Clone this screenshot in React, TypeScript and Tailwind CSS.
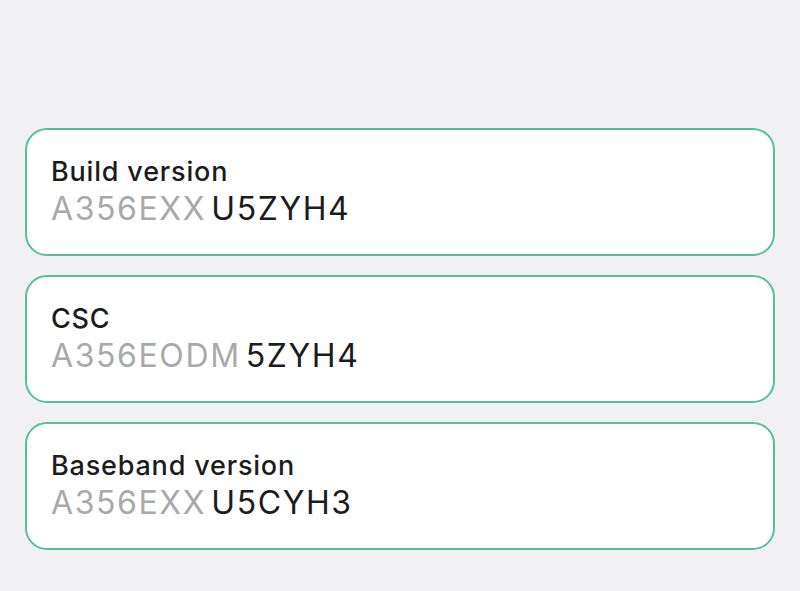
export default function App() {
  const rows = [
    { title: "Build version", grey: "A356EXX", dark: "U5ZYH4" },
    { title: "CSC", grey: "A356EODM", dark: "5ZYH4" },
    { title: "Baseband version", grey: "A356EXX", dark: "U5CYH3" },
  ];
  return (
    <div className="w-[800px] h-[591px] bg-[#f1f1f3] pt-[128px] px-[25px] font-['Inter',sans-serif]">
      <div className="flex flex-col gap-[19px]">
        {rows.map((r) => (
          <div
            key={r.title}
            className="h-[128px] rounded-[22px] border-2 border-[#56bf98] bg-white pl-[24px] pt-[25px]"
          >
            <div className="text-[27px] leading-[34px] font-medium tracking-[0.03em] text-[#1c1c1e]">{r.title}</div>
            <div className="text-[32px] leading-[40px] tracking-[0.05em]">
              <span className="text-[#a9a9ab]">{r.grey}</span>
              <span className="ml-[5px] text-[#1c1c1e]">{r.dark}</span>
            </div>
          </div>
        ))}
      </div>
    </div>
  );
}
